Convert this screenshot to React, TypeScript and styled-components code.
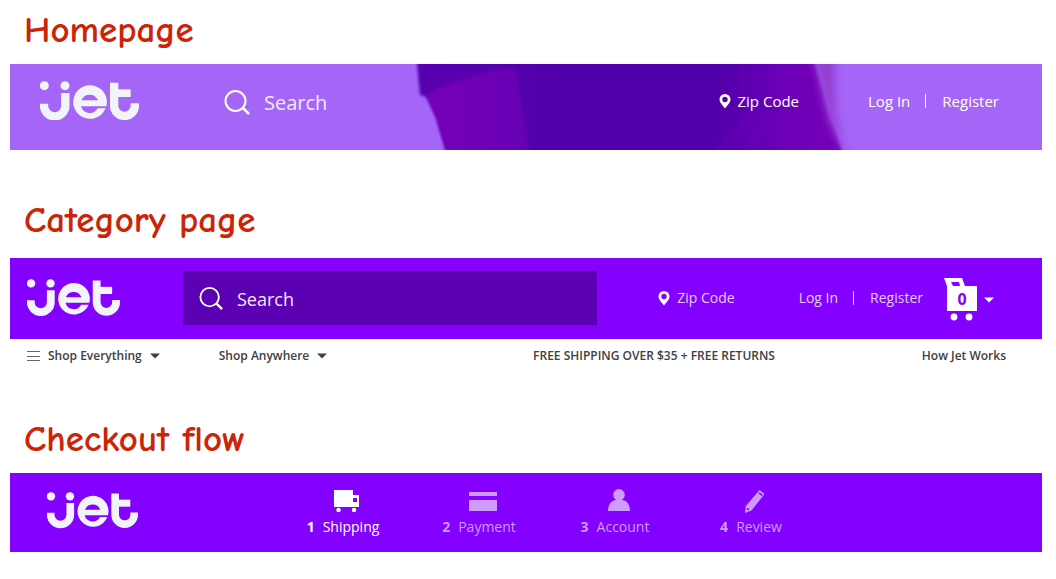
import React from "react";
import styled, { createGlobalStyle } from "styled-components";

const GlobalStyle = createGlobalStyle`
  *, *::before, *::after { box-sizing: border-box; }
  body {
    margin: 0;
    background: #fff;
    font-family: "Open Sans", "Noto Sans", sans-serif;
  }
`;

const Page = styled.main`
  padding: 6px 14px 24px 10px;
`;

const Section = styled.section<{ $space?: number }>`
  margin-top: ${(p) => p.$space ?? 0}px;
`;

const Title = styled.h2<{ $drop: number }>`
  margin: 0;
  padding: 0 14px ${(p) => p.$drop}px;
  font-family: Chalkboard, "Chalkboard SE", "Comic Neue", "Open Sans", sans-serif;
  font-size: 37px;
  font-weight: 700;
  line-height: 48px;
  color: #cb2406;
`;

const Bar = styled.header<{ $height: number; $pad: string; $clear?: boolean }>`
  position: relative;
  display: flex;
  align-items: center;
  min-height: ${(p) => p.$height}px;
  padding: ${(p) => p.$pad};
  background: ${(p) => (p.$clear ? "#a566f8" : "#8400ff")};
  color: #fff;
`;

const Backdrop = styled.svg`
  position: absolute;
  inset: 0;
  width: 100%;
  height: 100%;
`;

const LogoLink = styled.a<{ $width: number; $gap: number }>`
  position: relative;
  flex: none;
  width: ${(p) => p.$width}px;
  margin-right: ${(p) => p.$gap}px;
  color: #f1f5f9;

  svg {
    display: block;
    width: 100%;
  }
`;

const SearchBox = styled.label<{ $boxed?: boolean }>`
  position: relative;
  display: flex;
  flex: 1;
  align-items: center;
  gap: 14px;
  min-width: 0;
  height: ${(p) => (p.$boxed ? 54 : 40)}px;
  padding: ${(p) => (p.$boxed ? "2px 16px 0" : "4px 0 0")};
  background: ${(p) => (p.$boxed ? "#5b00b3" : "transparent")};

  svg {
    flex: none;
    width: ${(p) => (p.$boxed ? 24 : 26)}px;
  }

  input {
    flex: 1;
    min-width: 0;
    padding: 0;
    border: 0;
    outline: 0;
    background: transparent;
    color: #fff;
    font: 400 ${(p) => (p.$boxed ? 18 : 20)}px/26px "Open Sans", sans-serif;
  }

  input::placeholder {
    color: #f3e9ff;
    opacity: 1;
  }
`;

const Account = styled.nav<{ $large?: boolean }>`
  position: relative;
  display: flex;
  align-items: center;
  margin-left: 61px;
  font-size: ${(p) => (p.$large ? 15 : 14)}px;
  line-height: 20px;
  color: ${(p) => (p.$large ? "#fff" : "#e6ccff")};

  a {
    color: inherit;
    text-decoration: none;
    white-space: nowrap;
  }
`;

const ZipButton = styled.button<{ $gap: number }>`
  display: flex;
  align-items: center;
  gap: 7px;
  margin: 0 ${(p) => p.$gap}px 0 0;
  padding: 0;
  border: 0;
  background: none;
  color: inherit;
  font: inherit;
  white-space: nowrap;
  cursor: pointer;
`;

const Divider = styled.span`
  width: 1px;
  height: 14px;
  margin: 0 16px 0 15px;
  background: currentColor;
`;

const CartButton = styled.button`
  display: flex;
  align-items: center;
  gap: 7px;
  margin: 0 0 0 21px;
  padding: 4px 0 0;
  border: 0;
  background: none;
  color: #fff;
  cursor: pointer;
`;

const CartIcon = styled.span`
  position: relative;
  display: block;
  width: 33px;
  height: 43px;

  svg {
    display: block;
  }
`;

const CartCount = styled.span`
  position: absolute;
  top: 10px;
  left: 3px;
  width: 30px;
  font: 700 16px/22px "Open Sans", sans-serif;
  text-align: center;
  color: #8400ff;
`;

const SubNav = styled.nav`
  display: flex;
  align-items: center;
  height: 34px;
  padding: 0 36px 0 17px;
  font-size: 12px;
  font-weight: 600;
  line-height: 18px;
  color: #404040;

  a {
    color: inherit;
    text-decoration: none;
  }
`;

const MenuButton = styled.button`
  display: flex;
  align-items: center;
  gap: 8px;
  margin: 0 59px 0 0;
  padding: 0;
  border: 0;
  background: none;
  color: inherit;
  font: inherit;
  white-space: nowrap;
  cursor: pointer;
`;

const Promo = styled.p`
  flex: 1;
  margin: 0;
  text-align: center;
`;

const Steps = styled.ol`
  display: flex;
  margin: 0;
  padding: 4px 0 0;
  list-style: none;
`;

const Step = styled.li<{ $active?: boolean }>`
  width: 136px;
  color: ${(p) => (p.$active ? "#fff" : "#d09bff")};

  a {
    display: flex;
    flex-direction: column;
    align-items: center;
    gap: 4px;
    color: inherit;
    font-size: 14px;
    line-height: 20px;
    text-decoration: none;
  }

  svg {
    margin-left: 8px;
  }

  b {
    margin-right: 8px;
    font-weight: 700;
  }
`;

function Logo({ width, gap }: { width: number; gap: number }) {
  return (
    <LogoLink href="#" aria-label="Jet" $width={width} $gap={gap}>
      <svg viewBox="0 0 297 118" fill="currentColor">
        <circle cx="13" cy="14" r="13.5" />
        <circle cx="75" cy="14" r="13.5" />
        <path
          d="M12 68v6a32 32 0 0 0 64 0V36M222.500 5v69a31 31 0 0 0 62 0v-7"
          fill="none"
          stroke="currentColor"
          strokeWidth="25"
        />
        <path d="M222 25h50v23h-50z" />
        <path
          fillRule="evenodd"
          d="M199 76A50.500 50.500 0 1 0 197 82H173A27 27 0 0 1 123 76ZM124 58A27 27 0 0 1 174 58Z"
        />
      </svg>
    </LogoLink>
  );
}

const SearchIcon = () => (
  <svg viewBox="0 0 26 25" fill="none" stroke="#fff" strokeWidth="2" aria-hidden="true">
    <circle cx="11.500" cy="11" r="10" />
    <path d="M18.500 17.500l6.500 6.500" strokeWidth="2.500" />
  </svg>
);

const Pin = () => (
  <svg width="12" height="16" viewBox="0 0 12 16" fill="#fff" aria-hidden="true">
    <path
      fillRule="evenodd"
      d="M6 1a5.500 5.500 0 0 0-5.500 5.500C.5 9.500 3.500 12 6 15.500 8.500 12 11.500 9.500 11.500 6.500A5.500 5.500 0 0 0 6 1Zm0 2.800a2.700 2.700 0 1 1 0 5.400 2.700 2.700 0 0 1 0-5.400Z"
    />
  </svg>
);

const Caret = () => (
  <svg width="10" height="6" viewBox="0 0 10 6" fill="currentColor" aria-hidden="true">
    <path d="M0 .5h10L5 5.500Z" />
  </svg>
);

const HeroShade = () => (
  <Backdrop viewBox="0 0 1032 86" preserveAspectRatio="none" aria-hidden="true">
    <defs>
      <filter id="soft" x="-10%" y="-10%" width="120%" height="120%">
        <feGaussianBlur stdDeviation="1.500" />
      </filter>
      <filter id="softer" x="-30%" y="-30%" width="160%" height="160%">
        <feGaussianBlur stdDeviation="4" />
      </filter>
      <linearGradient id="cloth" gradientUnits="userSpaceOnUse" x1="406" x2="838" y1="0" y2="0">
        <stop offset="0" stopColor="#5900b0" />
        <stop offset=".35" stopColor="#5000ab" />
        <stop offset=".68" stopColor="#4f00aa" />
        <stop offset=".79" stopColor="#6000b3" />
        <stop offset=".86" stopColor="#6d00b8" />
        <stop offset="1" stopColor="#7500b8" />
      </linearGradient>
      <linearGradient id="sleeve" gradientUnits="userSpaceOnUse" x1="414" x2="524" y1="0" y2="0">
        <stop offset="0" stopColor="#7500b7" />
        <stop offset=".6" stopColor="#6d00b6" />
        <stop offset="1" stopColor="#6400b3" />
      </linearGradient>
    </defs>
    <path d="M406-10l4 41 6 2 10 20 14 47h397l-18-50-16-60Z" fill="url(#cloth)" filter="url(#soft)" />
    <path d="M801-20h23l2 70 12 50-20-44Z" fill="#943cd2" filter="url(#softer)" />
    <path
      d="M417 30q24-12 47-18 20-7 38-7 4 0 5 6l14 89h-81l-14-47Z"
      fill="url(#sleeve)"
      filter="url(#soft)"
    />
    <path
      d="M705 90q25-20 38-44M732 90q18-18 20-36"
      stroke="#7400bd"
      strokeWidth="6"
      fill="none"
      filter="url(#softer)"
      opacity=".5"
    />
  </Backdrop>
);

const TruckIcon = () => (
  <svg width="26" height="24" viewBox="0 0 26 24" fill="currentColor" aria-hidden="true">
    <path fillRule="evenodd" d="M0 1h19v5h6v12H0ZM19 9v4h4V9Z" />
    <circle cx="4.500" cy="21" r="2.200" />
    <circle cx="20" cy="21" r="2.200" />
  </svg>
);

const CardIcon = () => (
  <svg width="28" height="24" viewBox="0 0 28 24" fill="currentColor" aria-hidden="true">
    <path d="M0 3h28v4H0ZM0 11h28v11H0Z" />
  </svg>
);

const PersonIcon = () => (
  <svg width="24" height="24" viewBox="0 0 24 24" fill="currentColor" aria-hidden="true">
    <circle cx="12" cy="5.800" r="5.800" />
    <path d="M1 22c0-7 4-11 8-11h6c4 0 8 4 8 11Z" />
  </svg>
);

const PencilIcon = () => (
  <svg width="22" height="24" viewBox="0 0 22 24" aria-hidden="true">
    <path d="M15.500 1l5 4-13 16.500L1 24l.8-7Z" fill="currentColor" />
    <path d="M15 3.800l3.200 2.600M3 19.500l1.800 1.400" stroke="#8400ff" strokeWidth="1.600" />
  </svg>
);

const steps = [
  { label: "Shipping", icon: <TruckIcon /> },
  { label: "Payment", icon: <CardIcon /> },
  { label: "Account", icon: <PersonIcon /> },
  { label: "Review", icon: <PencilIcon /> },
];

function Search({ boxed }: { boxed?: boolean }) {
  return (
    <SearchBox $boxed={boxed}>
      <SearchIcon />
      <input type="text" placeholder="Search" aria-label="Search" />
    </SearchBox>
  );
}

function AccountLinks({ large, children }: { large?: boolean; children?: React.ReactNode }) {
  return (
    <Account $large={large} aria-label="Account">
      <ZipButton type="button" $gap={large ? 69 : 64}>
        <Pin />
        Zip Code
      </ZipButton>
      <a href="#">Log In</a>
      <Divider />
      <a href="#">Register</a>
      {children}
    </Account>
  );
}

export default function App() {
  return (
    <Page>
      <GlobalStyle />
      <Section>
        <Title $drop={10}>Homepage</Title>
        <Bar $height={86} $pad="0 43px 13px 30px" $clear>
          <HeroShade />
          <Logo width={99} gap={85} />
          <Search />
          <AccountLinks large />
        </Bar>
      </Section>

      <Section $space={46}>
        <Title $drop={14}>Category page</Title>
        <Bar $height={81} $pad="0 48px 2px 17px">
          <Logo width={93} gap={63} />
          <Search boxed />
          <AccountLinks>
            <CartButton type="button" aria-label="Cart, 0 items">
              <CartIcon>
                <svg width="33" height="43" viewBox="0 0 33 43" fill="#fff">
                  <path fillRule="evenodd" d="M0 0h18l3 8h12v25H3V8ZM7 4l2 4h7l-1-4Z" />
                  <circle cx="10" cy="39" r="3.400" />
                  <circle cx="25" cy="39" r="3.400" />
                </svg>
                <CartCount>0</CartCount>
              </CartIcon>
              <Caret />
            </CartButton>
          </AccountLinks>
        </Bar>
        <SubNav aria-label="Shop">
          <MenuButton type="button">
            <svg width="13" height="12" viewBox="0 0 13 12" stroke="#666" aria-hidden="true">
              <path d="M0 1.500h13M0 6.500h13M0 10.500h13" />
            </svg>
            Shop Everything
            <Caret />
          </MenuButton>
          <MenuButton type="button">
            Shop Anywhere
            <Caret />
          </MenuButton>
          <Promo>FREE SHIPPING OVER $35 + FREE RETURNS</Promo>
          <a href="#">How Jet Works</a>
        </SubNav>
      </Section>

      <Section $space={42}>
        <Title $drop={10}>Checkout flow</Title>
        <Bar $height={79} $pad="0 38px 4px 37px">
          <Logo width={91} gap={137} />
          <Steps>
            {steps.map((step, i) => (
              <Step key={step.label} $active={i === 0}>
                <a href="#" aria-current={i === 0 ? "step" : undefined}>
                  {step.icon}
                  <span>
                    <b>{i + 1}</b>
                    {step.label}
                  </span>
                </a>
              </Step>
            ))}
          </Steps>
        </Bar>
      </Section>
    </Page>
  );
}
